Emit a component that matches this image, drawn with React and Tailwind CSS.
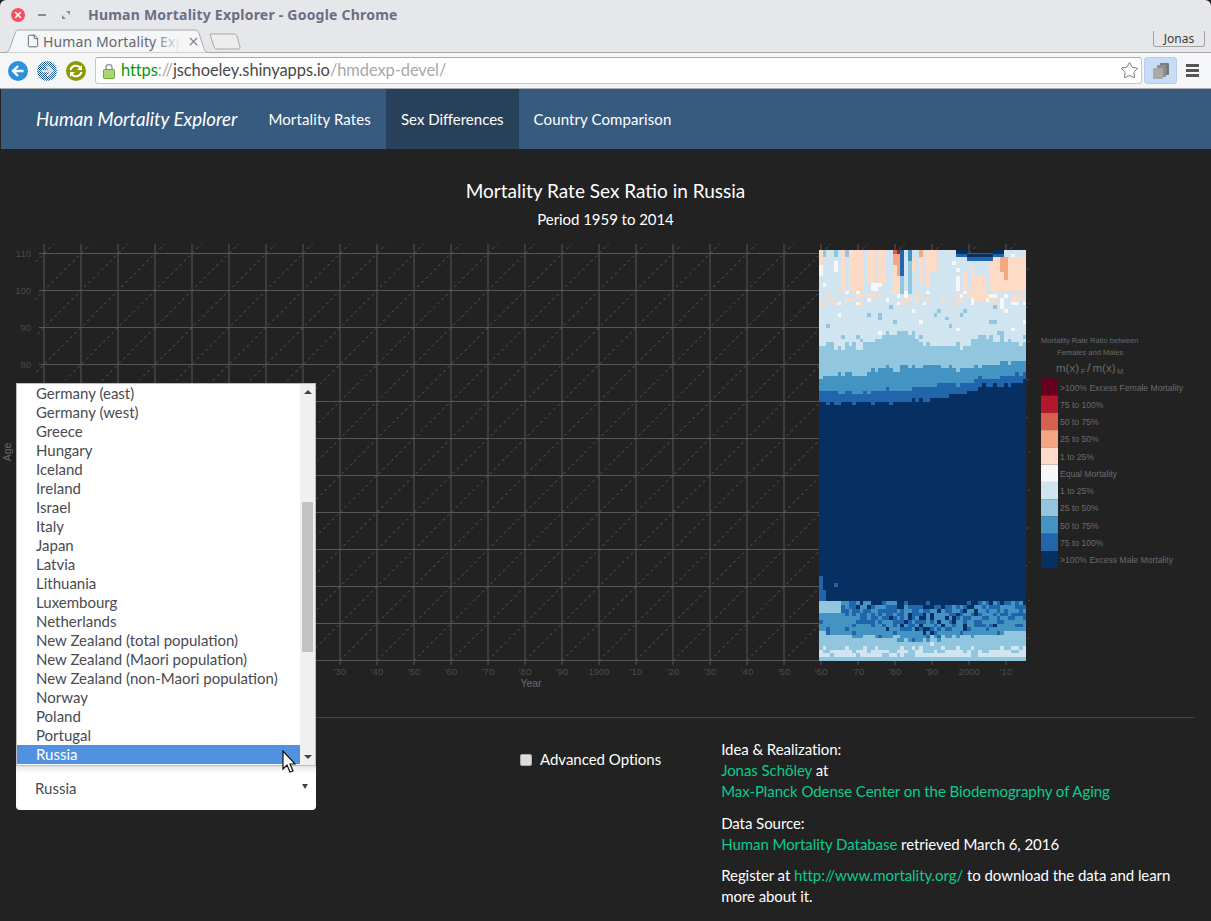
import React from 'react';
import { Star, X, File } from 'lucide-react';

const countries = [
  'Germany (east)', 'Germany (west)', 'Greece', 'Hungary', 'Iceland', 'Ireland', 'Israel', 'Italy', 'Japan',
  'Latvia', 'Lithuania', 'Luxembourg', 'Netherlands', 'New Zealand (total population)',
  'New Zealand (Maori population)', 'New Zealand (non-Maori population)', 'Norway', 'Poland', 'Portugal', 'Russia',
];

const palette = ['#67001f', '#b2182b', '#d6604d', '#f4a582', '#fddbc7', '#f7f7f7', '#d1e5f0', '#92c5de', '#4393c3', '#2166ac', '#053061'];

const legend = [
  '>100% Excess Female Mortality', '75 to 100%', '50 to 75%', '25 to 50%', '1 to 25%', 'Equal Mortality',
  '1 to 25%', '25 to 50%', '50 to 75%', '75 to 100%', '>100% Excess Male Mortality',
];

const yearLabels = ['1750', "'60", "'70", "'80", "'90", '1800', "'10", "'20", "'30", "'40", "'50", "'60", "'70", "'80", "'90", '1900', "'10", "'20", "'30", "'40", "'50", "'60", "'70", "'80", "'90", '2000', "'10"];

// pink / blue vertical runs in the old ages: [first col, last col, top y, bottom y, colour]
const topRuns = [
  [0, 0, 250, 263, 4], [0, 0, 263, 275, 5], [4, 4, 261, 272, 5], [6, 6, 250, 290, 4], [8, 11, 250, 290, 4],
  [13, 14, 250, 283, 4], [14, 15, 283, 290, 5], [16, 17, 250, 283, 4], [16, 16, 283, 287, 5], [20, 20, 250, 294, 4],
  [20, 20, 250, 264, 3], [20, 20, 250, 253, 2], [21, 21, 250, 252, 1], [21, 21, 252, 275, 3], [21, 21, 275, 294, 4],
  [22, 22, 250, 275, 9], [22, 22, 275, 294, 7], [24, 24, 250, 261, 8], [24, 24, 261, 294, 7], [25, 25, 257, 272, 4],
  [27, 27, 257, 283, 4], [27, 27, 250, 257, 3], [29, 30, 250, 272, 4], [29, 29, 272, 287, 4], [31, 31, 250, 272, 4],
  [37, 37, 275, 290, 5], [39, 39, 272, 290, 4], [41, 41, 264, 300, 4], [42, 44, 275, 300, 4], [46, 55, 257, 290, 4],
  [49, 50, 257, 272, 3], [50, 50, 272, 279, 3], [48, 48, 250, 257, 4], [53, 55, 257, 290, 4], [41, 41, 298, 304, 5],
];

function lerp(keys, t) {
  for (let i = 1; i < keys.length; i++) {
    if (t <= keys[i][0]) {
      const [t0, v0] = keys[i - 1];
      const [t1, v1] = keys[i];
      return v0 + ((v1 - v0) * (t - t0)) / (t1 - t0);
    }
  }
  return keys[keys.length - 1][1];
}

function buildCells() {
  let seed = 20160306;
  const rand = () => {
    seed = (seed * 1664525 + 1013904223) % 4294967296;
    return seed / 4294967296;
  };
  const cells = [];
  let walk = 0;
  for (let c = 0; c < 56; c++) {
    const t = c / 55;
    walk = walk * 0.8 + (rand() - 0.5) * 5;
    for (let a = 0; a < 111; a++) {
      const y = 660.5 - (a + 1) * 3.7;
      const mid = y + 1.85;
      const jit = walk + (rand() - 0.5) * 7;
      const mess = 1 - Math.abs(t - 0.55) * 1.5;
      let v = 10;
      const b67 = lerp([[0, 347], [0.22, 343], [0.36, 328], [0.44, 332], [0.55, 343], [0.73, 340], [0.78, 335], [1, 343]], t);
      const b78 = lerp([[0, 378], [0.2, 372], [0.35, 366], [0.5, 365], [0.7, 365], [1, 360]], t);
      const b89 = lerp([[0, 392], [0.2, 390], [0.4, 388], [0.6, 384], [0.8, 378], [1, 374]], t);
      const b90 = lerp([[0, 403], [0.2, 402], [0.4, 400], [0.55, 400], [0.65, 393], [0.8, 387], [1, 382]], t);
      if (mid < b67 + jit * 1.2) {
        v = 6;
        if (mid > 292 && mid < 306 && rand() < 0.22) v = rand() < 0.75 ? 4 : 5;
        if (mid > 305 && rand() < 0.04) v = 7;
      } else if (mid < b78 + jit * 0.8) v = 7;
      else if (mid < b89 + jit * 0.6) v = 8;
      else if (mid < b90 + jit * 0.5) v = 9;
      else if (mid < 600) {
        v = 10;
        if (c === 0 && mid > 575) v = 9;
        if (c === 1 && mid > 590) v = 9;
        if (c === 4 && mid > 582 && mid < 586) v = 9;
      } else {
        const n = (rand() - 0.5) * 10 * Math.max(mess, 0.35);
        const b0 = 601 + 4 * mess;
        const b1 = lerp([[0, 604], [0.2, 625], [0.5, 634], [0.75, 628], [1, 618]], t);
        const b2 = lerp([[0, 632], [0.3, 638], [0.6, 640], [1, 630]], t);
        const b3 = 648 + walk * 0.5;
        const d = mid + n;
        if (d < b0) v = 10;
        else if (d < b1) {
          const r = rand();
          const deep = Math.max(mess - 0.4, 0) * 0.5;
          v = r < deep ? 10 : r < 0.58 ? 9 : 8;
        } else if (d < b2) v = rand() < 0.85 ? 8 : 9;
        else if (d < b3) v = 7;
        else v = rand() < 0.12 ? 7 : 6;
        if (t < 0.1 && mid > 602 && mid < 614) v = 7;
        if (mid > 658.5) v = 7;
      }
      if (mid < 335 && v === 6 && rand() < 0.02) v = 5;
      for (const [c0, c1, y0, y1, col] of topRuns) {
        if (c >= c0 && c <= c1 && mid >= y0 && mid < y1) v = col;
      }
      if (c >= 37 && c <= 49 && mid < 262) {
        const edge = c < 40 ? 252 : c > 46 ? 254 : 257;
        if (mid < edge - 4) v = c > 46 ? 10 : -1;
        else if (mid < edge + 1) v = 10;
        else if (mid < edge + 4) v = 9;
      }
      if (a > 108 && c < 12 && v === 6 && c % 3 === 1) v = 7;
      if (v >= 0) cells.push({ c, a, v, y });
    }
  }
  return cells;
}

const cells = buildCells();

function MortalityChart() {
  const xs = Array.from({ length: 27 }, (_, i) => 44 + i * 37);
  const ages = Array.from({ length: 12 }, (_, i) => i * 10);
  const diagonals = Array.from({ length: 40 }, (_, i) => -400 + i * 37);
  return (
    <svg width="1211" height="450" viewBox="0 240 1211 450" className="block" style={{ fontFamily: '"Liberation Sans", sans-serif' }}>
      <defs>
        <clipPath id="plot">
          <rect x="35" y="244" width="995" height="421" />
        </clipPath>
      </defs>
      <g clipPath="url(#plot)" stroke="#6e6e6e" strokeWidth="0.8" strokeDasharray="2.5 3.5">
        {diagonals.map((d) => (
          <line key={d} x1={d} y1="660.5" x2={d + 430} y2="230.5" />
        ))}
      </g>
      {xs.map((x) => (
        <line key={x} x1={x} y1="244" x2={x} y2="665" stroke="#565656" strokeWidth="1" />
      ))}
      {ages.map((a) => (
        <line key={a} x1="39" y1={660.5 - a * 3.7} x2="1026" y2={660.5 - a * 3.7} stroke="#565656" strokeWidth="1" />
      ))}
      {ages.map((a) => (
        <text key={a} x="31" y={663.5 - a * 3.7} textAnchor="end" fontSize="9.5" fill="#484848">{a}</text>
      ))}
      {xs.map((x, i) => (
        <text key={x} x={x} y="675" textAnchor="middle" fontSize="9.5" fill="#4c4c4c">{yearLabels[i]}</text>
      ))}
      <text x="531" y="687" textAnchor="middle" fontSize="10.5" fill="#6a6a6a">Year</text>
      <text x="11" y="452" textAnchor="middle" fontSize="10.5" fill="#6a6a6a" transform="rotate(-90 11 452)">Age</text>
      <g shapeRendering="crispEdges">
        {cells.map(({ c, a, v, y }) => (
          <rect key={`${c}-${a}`} x={819 + c * 3.7} y={y} width="3.8" height="3.8" fill={palette[v]} />
        ))}
      </g>
      <text x="1041" y="343" fontSize="7.6" fill="#6a6a6a">Mortality Rate Ratio between</text>
      <text x="1057" y="355" fontSize="7.6" fill="#6a6a6a">Females and Males</text>
      <text x="1056" y="372" fontSize="11.5" fill="#6a6a6a">m(x)</text>
      <text x="1081" y="374" fontSize="7.5" fill="#6a6a6a">F</text>
      <text x="1087" y="372" fontSize="13" fill="#6a6a6a">/</text>
      <text x="1092.500" y="372" fontSize="11.5" fill="#6a6a6a">m(x)</text>
      <text x="1117" y="374" fontSize="7.5" fill="#6a6a6a">M</text>
      {legend.map((label, i) => (
        <g key={i}>
          <rect x="1041" y={378.3 + i * 17.27} width="17" height="17.3" fill={palette[i]} />
          <text x="1060" y={390.5 + i * 17.27} fontSize="8.6" fill="#6a6a6a">{label}</text>
        </g>
      ))}
    </svg>
  );
}

function BrowserChrome() {
  return (
    <div style={{ fontFamily: '"Noto Sans", sans-serif' }}>
      <div className="h-[53px] bg-[#e6e7ea] border-b border-[#a9a9a9] relative rounded-t-md">
        <div className="flex items-center h-[29px] pl-[11px]">
          <span className="w-[14px] h-[14px] rounded-full bg-[#f4515f] flex items-center justify-center">
            <X size={10} strokeWidth={3.5} className="text-white" />
          </span>
          <span className="w-[8px] h-[2px] bg-[#8b8b8f] ml-[13px]" />
          <svg width="8" height="8" viewBox="0 0 8 8" className="ml-[16px]">
            <path d="M4 0h4v4zM0 4l4 4H0z" fill="#8b8b8f" />
          </svg>
          <span className="ml-[18px] text-[14px] font-bold text-[#6c6e85] tracking-[0.22px]">Human Mortality Explorer - Google Chrome</span>
        </div>
        <div className="flex items-end pl-[1px]">
          <div className="relative w-[211px] h-[24px] flex items-center pl-[25px]">
            <svg width="211" height="24" viewBox="0 0 211 24" className="absolute left-0 top-0">
              <path d="M0 23.5h4c3 0 4-2 5-5l5-14c1-3 2-3.5 5-3.5h174c3 0 4 .5 5 3.5l5 15c1 3 2 4 5 4h3" fill="#f5f6f8" stroke="#a9a9a9" />
            </svg>
            <File size={14} strokeWidth={1.5} className="relative text-[#55565a]" />
            <span className="relative ml-[3px] w-[138px] overflow-hidden whitespace-nowrap text-[14px] tracking-[0.12px] text-[#66676c]">
              Human Mortality Explorer
              <span className="absolute right-0 top-0 h-full w-[28px] bg-gradient-to-r from-transparent to-[#f5f6f8]" />
            </span>
            <X size={13} strokeWidth={2.5} className="relative ml-[6px] text-[#8b8b8f]" />
          </div>
          <svg width="32" height="17" viewBox="0 0 32 17" className="mb-[3px] -ml-[3px]">
            <path d="M1 1h24c1.500 0 2 .5 3 2l3 11c.3 1.500-.5 2-2 2H8c-1.500 0-2-.5-3-2L1 1z" fill="#eceded" stroke="#a9a9a9" />
          </svg>
        </div>
        <div className="absolute right-[6px] bottom-[5px] w-[52px] h-[16px] border border-t-0 border-[#a3a3a3] rounded-b-[3px] flex items-center justify-center text-[12px] text-[#333] leading-none [text-shadow:0_0_1px_#fff]">Jonas</div>
      </div>
      <div className="h-[36px] bg-[#f5f6f8] border-b border-[#a9a9a9] flex items-center pl-[8px] pr-[9px]">
        <svg width="20" height="20" viewBox="0 0 20 20">
          <circle cx="10" cy="10" r="10" fill="#2a92dc" />
          <path d="M15.500 10H6M10 5l-5 5 5 5" fill="none" stroke="#fff" strokeWidth="2.400" />
        </svg>
        <svg width="20" height="20" viewBox="0 0 20 20" className="ml-[9px]">
          <defs>
            <pattern id="dither" width="2" height="2" patternUnits="userSpaceOnUse">
              <rect width="2" height="2" fill="#f5f6f8" />
              <rect width="1" height="1" fill="#1f5f9c" />
              <rect x="1" y="1" width="1" height="1" fill="#1f5f9c" />
            </pattern>
          </defs>
          <circle cx="10" cy="10" r="10" fill="url(#dither)" />
          <path d="M4.500 10H14M10 5l5 5-5 5" fill="none" stroke="#dfe3e8" strokeWidth="2.400" />
        </svg>
        <svg width="20" height="20" viewBox="0 0 20 20" className="ml-[9px]">
          <circle cx="10" cy="10" r="10" fill="#8c9a00" />
          <path d="M4.500 9a5.600 5.600 0 0 1 10-2M15.500 11a5.600 5.600 0 0 1-10 2" fill="none" stroke="#fff" strokeWidth="2" />
          <path d="M16 4v5h-5zM4 16v-5h5z" fill="#fff" />
        </svg>
        <div className="ml-[9px] w-[1047px] h-[27px] bg-white border border-[#c8c8c8] border-t-[#a9a9a9] rounded-[3px] flex items-center pl-[7px] pr-[2px]">
          <svg width="12" height="16" viewBox="0 0 12 16" className="shrink-0">
            <path d="M3 7V4.500a3 3 0 0 1 6 0V7" fill="none" stroke="#9a9a9a" strokeWidth="1.500" />
            <rect x="0.500" y="6.500" width="11" height="9" rx="1" fill="#a6d86e" stroke="#6aa63a" />
          </svg>
          <span className="ml-[6px] text-[16.5px] tracking-[-0.1px] whitespace-nowrap" style={{ fontFamily: 'Lato, sans-serif' }}>
            <span className="text-[#0a9a0a]">https</span>
            <span className="text-[#a8a8a8]">://</span>
            <span className="text-[#4a4a4a]">jschoeley.shinyapps.io</span>
            <span className="text-[#a8a8a8]">/hmdexp-devel/</span>
          </span>
          <Star size={19} strokeWidth={1} className="ml-auto text-[#555]" />
        </div>
        <div className="ml-[2px] w-[33px] h-[27px] bg-[#c9dcf7] border border-[#b5cdee] rounded-[3px] flex items-center justify-center">
          <svg width="18" height="18" viewBox="0 0 18 18">
            <rect x="8" y="1" width="9" height="12" rx="1" fill="#7a7a7a" />
            <rect x="5" y="3" width="9" height="12" rx="1" fill="#8e8e8e" />
            <rect x="1" y="6" width="10" height="11" rx="1" fill="#a9a9a9" />
          </svg>
        </div>
        <div className="ml-[9px] w-[13px] flex flex-col gap-[2px]">
          <span className="h-[3px] bg-[#555]" />
          <span className="h-[3px] bg-[#555]" />
          <span className="h-[3px] bg-[#555]" />
        </div>
      </div>
    </div>
  );
}

function CountryDropdown() {
  return (
    <div className="absolute left-0 bottom-[44px] w-[300px] h-[383px] bg-white border border-[#bdbdbd] flex overflow-hidden">
      <ul className="flex-1 text-[15px] leading-[19px] text-[#4a4a52]">
        {countries.map((name) => (
          <li key={name} className={`pl-[19px] h-[19px] whitespace-nowrap ${name === 'Russia' ? 'bg-[#5192e0] text-white' : ''}`}>{name}</li>
        ))}
      </ul>
      <div className="relative w-[15px] bg-[#f0f0f0]">
        <span className="absolute left-[4px] top-[6px] w-0 h-0 border-x-[4px] border-x-transparent border-b-[4px] border-b-[#444]" />
        <span className="absolute left-[2px] top-[118px] w-[11px] h-[150px] bg-[#c2c2c2]" />
        <span className="absolute left-[4px] bottom-[6px] w-0 h-0 border-x-[4px] border-x-transparent border-t-[4px] border-t-[#444]" />
      </div>
    </div>
  );
}

const App = () => {
  return (
    <div className="w-[1211px] h-[921px] overflow-hidden bg-[#222222] text-white" style={{ fontFamily: 'Lato, sans-serif' }}>
      <BrowserChrome />

      {/* Navbar */}
      <nav className="h-[60px] bg-[#375a7f] flex items-stretch pl-[35px] text-[15px] ml-[1px]">
        <a className="flex items-center text-[18.7px] italic mr-[16px]">Human Mortality Explorer</a>
        <a className="flex items-center px-[15px] tracking-[0.13px]">Mortality Rates</a>
        <a className="flex items-center px-[15px] bg-[#28415b]">Sex Differences</a>
        <a className="flex items-center px-[15px] tracking-[0.1px]">Country Comparison</a>
      </nav>

      <div className="pt-[30px] text-center">
        <h4 className="text-[19px] leading-[24px]">Mortality Rate Sex Ratio in Russia</h4>
        <p className="text-[15px] leading-[21px] mt-[6px] tracking-[-0.05px]">Period 1959 to 2014</p>
      </div>

      <div className="mt-[10px]">
        <MortalityChart />
      </div>

      <hr className="mt-[27px] mx-[16px] border-[#464545]" />

      <div className="flex pl-[16px] text-[15px] leading-[21px]">
        <div className="relative w-[300px] mt-[48px] h-[44px] bg-white rounded-b-[4px] rounded-t-none shadow-[inset_0_6px_6px_-4px_rgba(0,0,0,0.15)] flex items-center pl-[19px] text-[#4a4a52]">
          <CountryDropdown />
          <span>Russia</span>
          <span className="absolute right-[8px] top-[18px] w-0 h-0 border-x-[3px] border-x-transparent border-t-[5px] border-t-[#444]" />
        </div>
        <label className="ml-[204px] mt-[31px] h-[21px] flex items-center">
          <span className="w-[12px] h-[12px] bg-[#dcdcdc] border border-[#aaa] rounded-[2px]" />
          <span className="ml-[8px] tracking-[-0.02px]">Advanced Options</span>
        </label>
        <div className="ml-[60px] mt-[21px] w-[470px] tracking-[-0.06px]">
          <p>Idea &amp; Realization:</p>
          <p><span className="text-[#0acb90]">Jonas Schöley</span> at</p>
          <p className="text-[#0acb90]">Max-Planck Odense Center on the Biodemography of Aging</p>
          <p className="mt-[11px]">Data Source:</p>
          <p><span className="text-[#0acb90]">Human Mortality Database</span> retrieved March 6, 2016</p>
          <p className="mt-[10px]">Register at <span className="text-[#0acb90]">http://www.mortality.org/</span> to download the data and learn more about it.</p>
        </div>
      </div>

      {/* mouse pointer */}
      <svg width="14" height="24" viewBox="0 0 14 24" className="absolute left-[282px] top-[750px]">
        <path d="M1 1v18l4-4 3 7 3-1-3-7h5z" fill="#fff" stroke="#111" strokeWidth="1.200" />
      </svg>
    </div>
  );
};

export default App;
